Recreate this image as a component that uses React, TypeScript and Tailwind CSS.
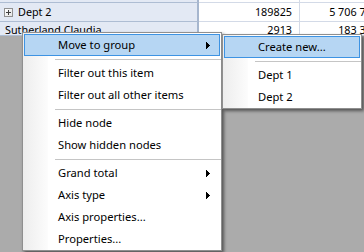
import React from "react";

const Arrow = () => (
  <svg width="4" height="7" viewBox="0 0 4 7" shapeRendering="crispEdges">
    <path d="M0 0h1v1h1v1h1v1h1v1h-1v1h-1v1h-1v1h-1z" fill="#000" />
  </svg>
);

const PlusBox = () => (
  <div className="w-[9px] h-[9px] border border-[#919191] bg-gradient-to-br from-white to-[#e4e4e4] relative shrink-0">
    <div className="absolute left-[1px] top-[3px] w-[5px] h-px bg-[#404040]" />
    <div className="absolute left-[3px] top-[1px] w-px h-[5px] bg-[#404040]" />
  </div>
);

type ItemProps = { label: string; sub?: boolean; active?: boolean };

const Item = ({ label, sub, active }: ItemProps) => (
  <div className="relative h-[22px] flex items-center">
    {active && (
      <div className="absolute left-[1px] right-[1px] top-0 bottom-0 bg-[#b6d6f3] border border-[#3d93e3]" />
    )}
    <span className="relative pl-[35px] leading-[22px] text-black whitespace-nowrap">{label}</span>
    {sub && (
      <span className="absolute right-[11px] top-[8px] flex">
        <Arrow />
      </span>
    )}
  </div>
);

const Sep = () => (
  <div className="h-[6px] flex items-center pl-[32px]">
    <div className="h-px flex-1 bg-[#c5c5c5]" />
  </div>
);

type RowProps = {
  h: string;
  head?: React.ReactNode;
  v1?: string;
  v2?: string;
  align?: string;
};

const Row = ({ h, head, v1, v2, align = "items-center" }: RowProps) => (
  <div className={`flex ${h}`}>
    <div className={`w-[199px] shrink-0 bg-[#e3e9f4] border-r-2 border-b border-r-[#a6b6ce] border-b-[#aebdd3] flex ${align} overflow-hidden`}>
      {head}
    </div>
    <div className={`w-[101px] shrink-0 bg-white border-r border-b border-[#d3dae7] flex ${align} justify-end pr-[7px] overflow-hidden`}>
      {v1}
    </div>
    <div className={`w-[86px] shrink-0 bg-white border-b border-[#d3dae7] flex ${align} justify-end pr-[8px] overflow-hidden`}>
      {v2}
    </div>
  </div>
);

export default function App() {
  return (
    <div className="relative w-[364px] h-[252px] overflow-hidden bg-[#ababab] font-['Noto_Sans',sans-serif]">
      <div className="flex flex-col w-[386px] text-[10.8px] text-black leading-[14px]">
        <Row h="h-[3px]" />
        <Row
          h="h-[19px]"
          head={
            <div className="flex items-center pl-[4px] gap-[5px]">
              <PlusBox />
              <span>Dept 2</span>
            </div>
          }
          v1="189825"
          v2="5 706 762"
        />
        <Row
          h="h-[14px]"
          align="items-start pt-[1px]"
          head={<span className="pl-[5px] whitespace-nowrap">Sutherland Claudia</span>}
          v1="2913"
          v2="183 375"
        />
      </div>

      {/* main context menu */}
      <div className="absolute left-[22px] top-[32px] w-[200px] bg-white border border-[#8f8f8f] pt-[1px] text-[11.2px] shadow-[2px_2px_3px_rgba(0,0,0,0.5)]">
        <div className="absolute left-0 top-0 bottom-0 w-[25px] bg-gradient-to-r from-[#ededed] to-[#fcfcfc]" />
        <div className="relative">
          <Item label="Move to group" sub active />
          <Sep />
          <Item label="Filter out this item" />
          <Item label="Filter out all other items" />
          <Sep />
          <Item label="Hide node" />
          <Item label="Show hidden nodes" />
          <Sep />
          <Item label="Grand total" sub />
          <Item label="Axis type" sub />
          <Item label="Axis properties..." />
          <Item label="Properties..." />
        </div>
      </div>

      {/* submenu */}
      <div className="absolute left-[222px] top-[34px] w-[140px] bg-white border border-[#8f8f8f] pt-[1px] text-[11.2px] shadow-[2px_2px_3px_rgba(0,0,0,0.5)]">
        <div className="absolute left-0 top-0 bottom-0 w-[25px] bg-gradient-to-r from-[#ededed] to-[#fcfcfc]" />
        <div className="relative">
          <Item label="Create new..." active />
          <Sep />
          <Item label="Dept 1" />
          <Item label="Dept 2" />
        </div>
      </div>
    </div>
  );
}
